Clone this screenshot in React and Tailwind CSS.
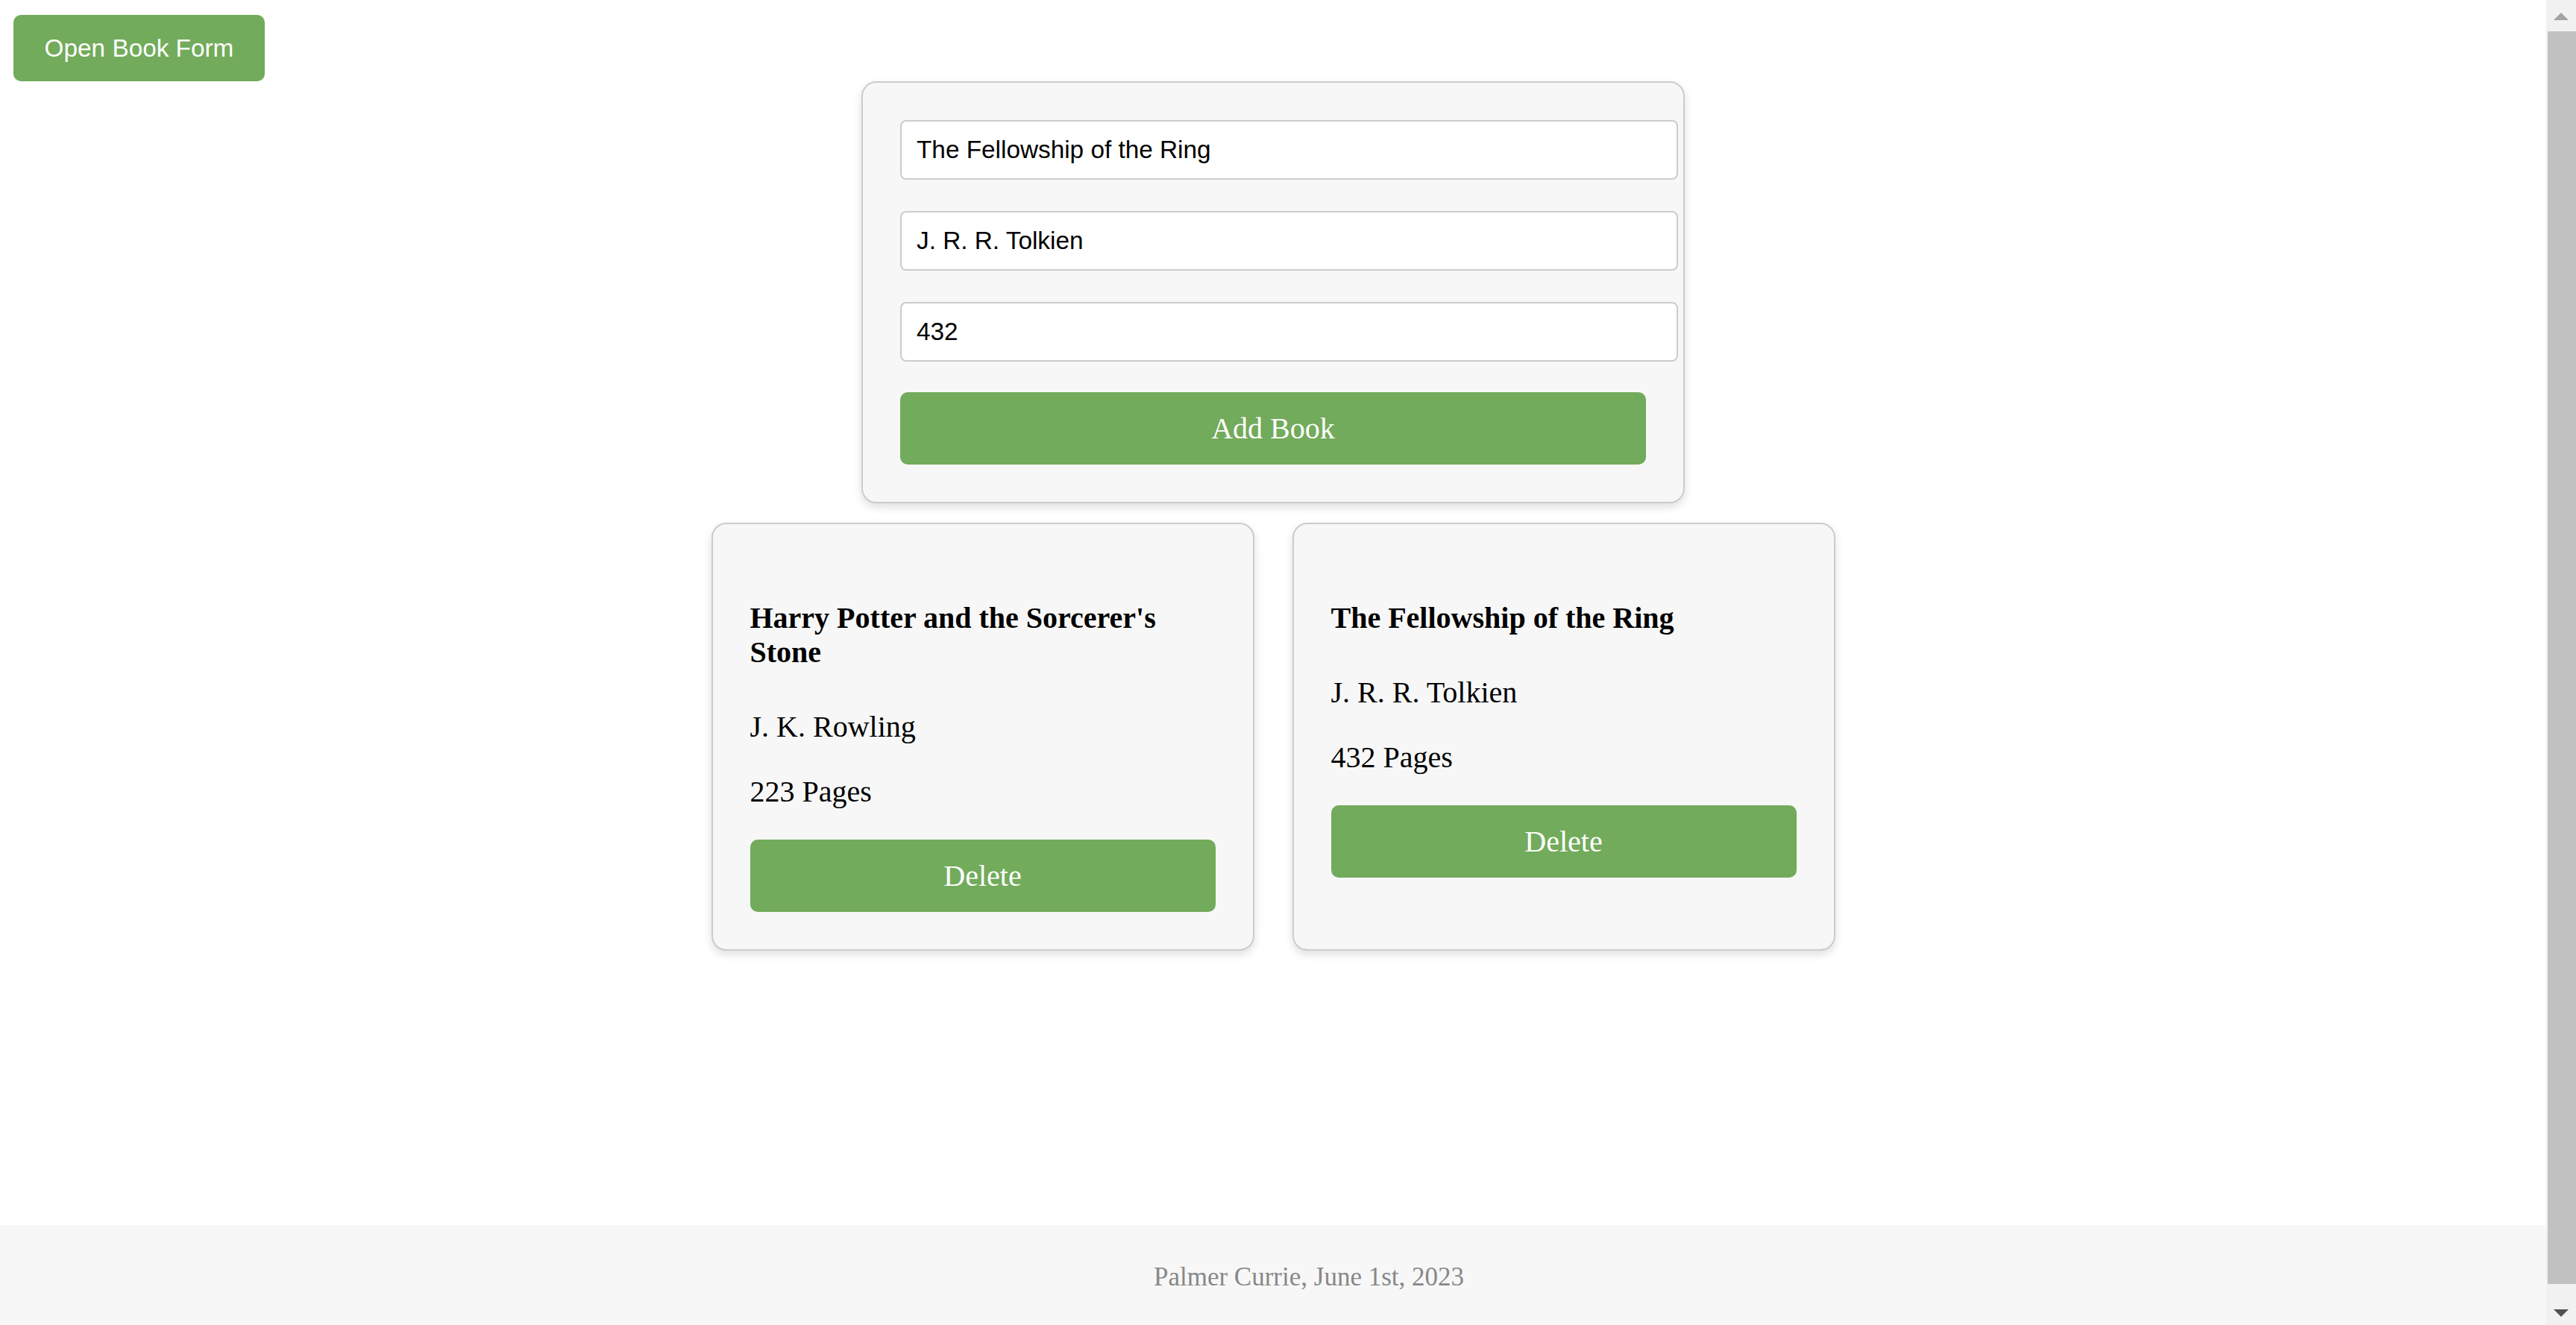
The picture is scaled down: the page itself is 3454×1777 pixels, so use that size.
const books = [
  { title: "Harry Potter and the Sorcerer's Stone", author: "J. K. Rowling", pages: 223 },
  { title: "The Fellowship of the Ring", author: "J. R. R. Tolkien", pages: 432 },
];

function BookCard({ book }) {
  return (
    <div className="w-[728px] rounded-[20px] border-2 border-[#cccccc] bg-[#f7f7f7] px-[50px] pb-[50px] pt-[50px] shadow-[0_5px_12px_rgba(0,0,0,0.13)]">
      <h4 className="mt-[53px] mb-[54px] text-[40px] font-bold leading-[46px] text-black">{book.title}</h4>
      <p className="text-[40px] leading-[46px] text-black">{book.author}</p>
      <p className="mt-[41px] text-[40px] leading-[46px] text-black">{book.pages} Pages</p>
      <button className="mt-[41px] h-[97px] w-full rounded-[10px] bg-[#72ab5b] text-[40px] text-white">
        Delete
      </button>
    </div>
  );
}

function FakeScrollbar() {
  return (
    <div className="flex h-screen w-[40px] shrink-0 flex-col bg-[#f1f1f1]">
      <div className="flex h-[42px] items-start justify-center pt-[17px]">
        <svg width="20" height="10" viewBox="0 0 20 10">
          <polygon points="10,0 20,10 0,10" fill="#a3a3a3" />
        </svg>
      </div>
      <div className="ml-[2px] flex-1 bg-[#c1c1c1]" />
      <div className="flex h-[55px] items-start justify-center pt-[34px]">
        <svg width="20" height="10" viewBox="0 0 20 10">
          <polygon points="0,0 20,0 10,10" fill="#505050" />
        </svg>
      </div>
    </div>
  );
}

export default function App() {
  return (
    <div className="flex h-screen overflow-hidden bg-white font-['Liberation_Serif','Times_New_Roman',serif]">
      <div className="flex min-w-0 flex-1 flex-col">
        <main className="flex-1">
          <div className="pl-[18px] pt-[20px]">
            <button className="h-[89px] w-[337px] rounded-[10px] bg-[#72ab5b] font-['Liberation_Sans',Arial,sans-serif] text-[33.33px] text-white">
              Open Book Form
            </button>
          </div>

          <div className="mx-auto w-[1104px] rounded-[20px] border-2 border-[#cccccc] bg-[#f7f7f7] p-[50px] shadow-[0_5px_12px_rgba(0,0,0,0.13)]">
            <div className="flex flex-col gap-[42px]">
              <input
                defaultValue="The Fellowship of the Ring"
                className="h-[80px] w-[1043px] rounded-[8px] border-2 border-[#cccccc] bg-white px-[20px] font-['Liberation_Sans',Arial,sans-serif] text-[33.33px] text-black outline-none"
              />
              <input
                defaultValue="J. R. R. Tolkien"
                className="h-[80px] w-[1043px] rounded-[8px] border-2 border-[#cccccc] bg-white px-[20px] font-['Liberation_Sans',Arial,sans-serif] text-[33.33px] text-black outline-none"
              />
              <input
                defaultValue="432"
                className="h-[80px] w-[1043px] rounded-[8px] border-2 border-[#cccccc] bg-white px-[20px] font-['Liberation_Sans',Arial,sans-serif] text-[33.33px] text-black outline-none"
              />
            </div>
            <button className="mt-[41px] h-[97px] w-full rounded-[10px] bg-[#72ab5b] text-[40px] text-white">
              Add Book
            </button>
          </div>

          <div className="mt-[26px] flex justify-center gap-[51px]">
            {books.map(b => (
              <BookCard key={b.title} book={b} />
            ))}
          </div>
        </main>

        <footer className="h-[134px] shrink-0 bg-[#f7f7f7] pl-[96px] pt-[50px] text-center text-[35px] leading-[40px] text-[#888888]">
          Palmer Currie, June 1st, 2023
        </footer>
      </div>
      <FakeScrollbar />
    </div>
  );
}
